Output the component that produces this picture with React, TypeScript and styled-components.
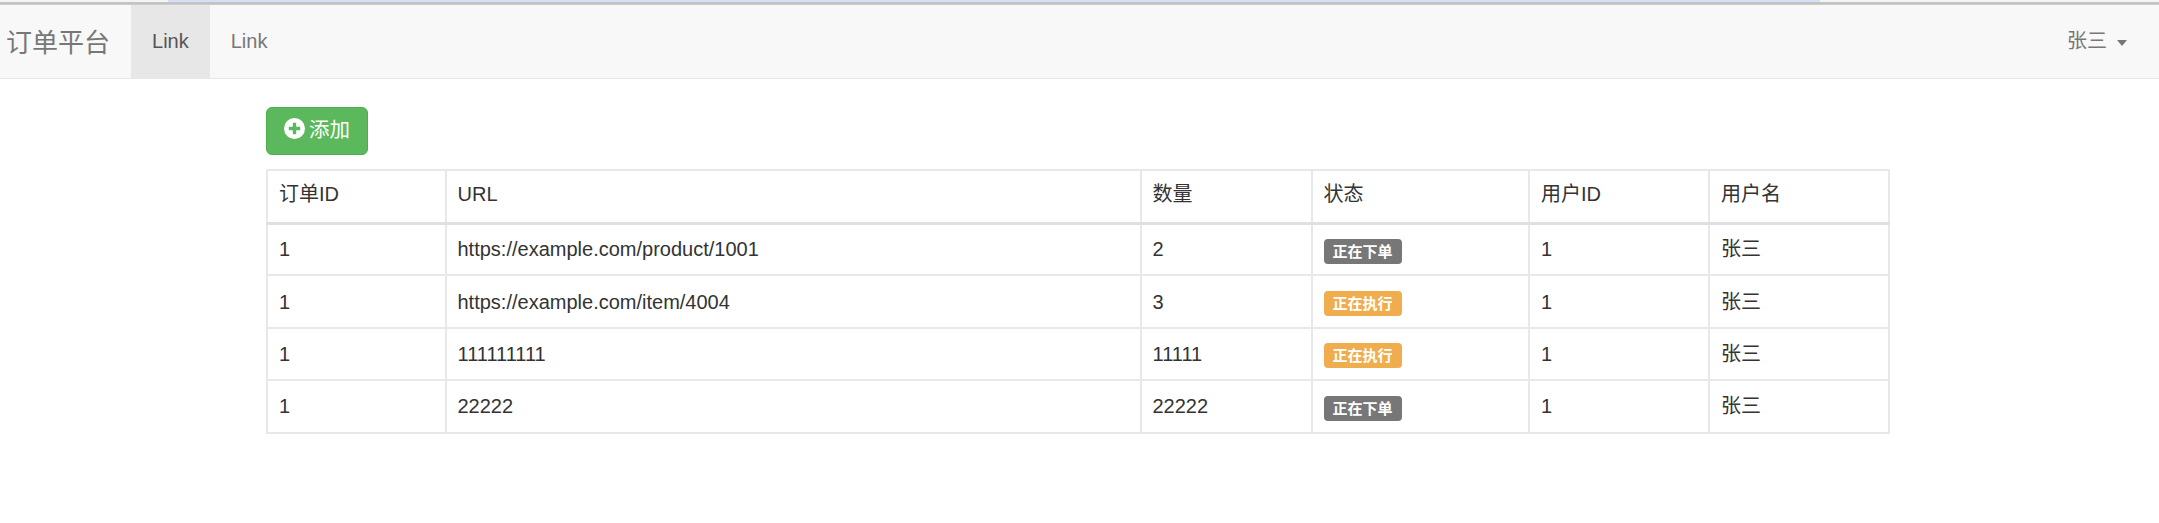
import * as React from "react"
import styled, { createGlobalStyle } from "styled-components"

const GlobalStyle = createGlobalStyle`
  html, body {
    margin: 0;
    padding: 0;
    background: #fff;
  }
  body {
    font-family: "Liberation Sans", "Noto Sans CJK SC", sans-serif;
    font-size: 20px;
    line-height: 28px;
    color: #333;
  }
`

const WindowEdge = styled.div`
  height: 5px;
  padding: 0 339px 0 168px;
  background: linear-gradient(#f4f4f4 0, #f4f4f4 2px, #c8c8c8 2px, #bdbdbd 4px, #dcdcdc 5px);
`

const EdgeHighlight = styled.div`
  height: 2px;
  background: #d3dff5;
`

const Navbar = styled.nav`
  display: flex;
  justify-content: space-between;
  height: 73px;
  background: #f8f8f8;
  border-bottom: 1px solid #e7e7e7;
`

const NavLeft = styled.div`
  display: flex;
`

const Brand = styled.a`
  display: flex;
  align-items: center;
  padding: 2px 21px 0 6px;
  font-size: 26px;
  color: #777;
`

const NavLink = styled.a<{ active?: boolean }>`
  display: flex;
  align-items: center;
  padding: 0 21px 1px;
  color: ${({ active }) => (active ? "#555" : "#777")};
  background: ${({ active }) => (active ? "#e7e7e7" : "transparent")};
`

const UserMenu = styled.a`
  display: flex;
  align-items: center;
  gap: 10px;
  padding: 0 32px 2px 0;
  color: #777;
`

const Caret = styled.span`
  width: 0;
  height: 0;
  margin-top: 4px;
  border-top: 6px solid #777;
  border-left: 5.5px solid transparent;
  border-right: 5.5px solid transparent;
`

const Content = styled.main`
  width: 1622px;
  margin: 28px 0 0 266px;
`

const AddButton = styled.button`
  display: flex;
  align-items: center;
  gap: 4px;
  width: 102px;
  height: 48px;
  padding: 0 0 3px 17px;
  font: inherit;
  font-size: 20.5px;
  color: #fff;
  background: #5cb85c;
  border: 1px solid #4cae4c;
  border-radius: 6px;
`

const PlusIcon = styled.svg`
  width: 21px;
  height: 21px;
  margin-top: -2px;
  fill: #fff;
`

const Table = styled.table`
  width: 100%;
  margin-top: 14px;
  table-layout: fixed;
  border-collapse: collapse;
`

const Column = styled.col<{ width: number }>`
  width: ${({ width }) => width}px;
`

const HeadCell = styled.th`
  height: 53px;
  padding: 0 11px 4px;
  box-sizing: border-box;
  font-weight: 400;
  text-align: left;
  border: 2px solid #e8e8e8;
  border-bottom: 3px solid #e0e0e0;
`

const Cell = styled.td`
  height: 52.4px;
  padding: 0 11px;
  box-sizing: border-box;
  border: 2px solid #e8e8e8;
`

const Badge = styled.span<{ tone: "default" | "warning" }>`
  display: inline-block;
  height: 25px;
  padding: 0 9px;
  margin-top: 1px;
  vertical-align: middle;
  font-size: 15px;
  font-weight: 700;
  line-height: 25px;
  color: #fff;
  background: ${({ tone }) => (tone === "warning" ? "#f0ad4e" : "#777")};
  border-radius: 4px;
`

interface Order {
  id: number
  url: string
  quantity: number
  executing: boolean
}

const orders: Order[] = [
  { id: 1, url: "https://example.com/product/1001", quantity: 2, executing: false },
  { id: 1, url: "https://example.com/item/4004", quantity: 3, executing: true },
  { id: 1, url: "111111111", quantity: 11111, executing: true },
  { id: 1, url: "22222", quantity: 22222, executing: false },
]

const columnWidths = [178.5, 695, 171, 217.5, 180, 180]
const headers = ["订单ID", "URL", "数量", "状态", "用户ID", "用户名"]

const App = () => (
  <>
    <GlobalStyle />
    <WindowEdge>
      <EdgeHighlight />
    </WindowEdge>
    <Navbar>
      <NavLeft>
        <Brand>订单平台</Brand>
        <NavLink active>Link</NavLink>
        <NavLink>Link</NavLink>
      </NavLeft>
      <UserMenu>
        张三
        <Caret />
      </UserMenu>
    </Navbar>
    <Content>
      <AddButton>
        <PlusIcon viewBox="0 0 20 20">
          <path
            fillRule="evenodd"
            d="M10 0a10 10 0 1 0 0 20a10 10 0 1 0 0-20ZM8.4 4.6h3.2v3.8h3.8v3.2h-3.8v3.8H8.4v-3.8H4.6V8.4h3.8Z"
          />
        </PlusIcon>
        添加
      </AddButton>
      <Table>
        <colgroup>
          {columnWidths.map((width, index) => (
            <Column key={index} width={width} />
          ))}
        </colgroup>
        <thead>
          <tr>
            {headers.map((header) => (
              <HeadCell key={header}>{header}</HeadCell>
            ))}
          </tr>
        </thead>
        <tbody>
          {orders.map((order) => (
            <tr key={order.url}>
              <Cell>{order.id}</Cell>
              <Cell>{order.url}</Cell>
              <Cell>{order.quantity}</Cell>
              <Cell>
                <Badge tone={order.executing ? "warning" : "default"}>
                  {order.executing ? "正在执行" : "正在下单"}
                </Badge>
              </Cell>
              <Cell>1</Cell>
              <Cell>张三</Cell>
            </tr>
          ))}
        </tbody>
      </Table>
    </Content>
  </>
)

export default App
